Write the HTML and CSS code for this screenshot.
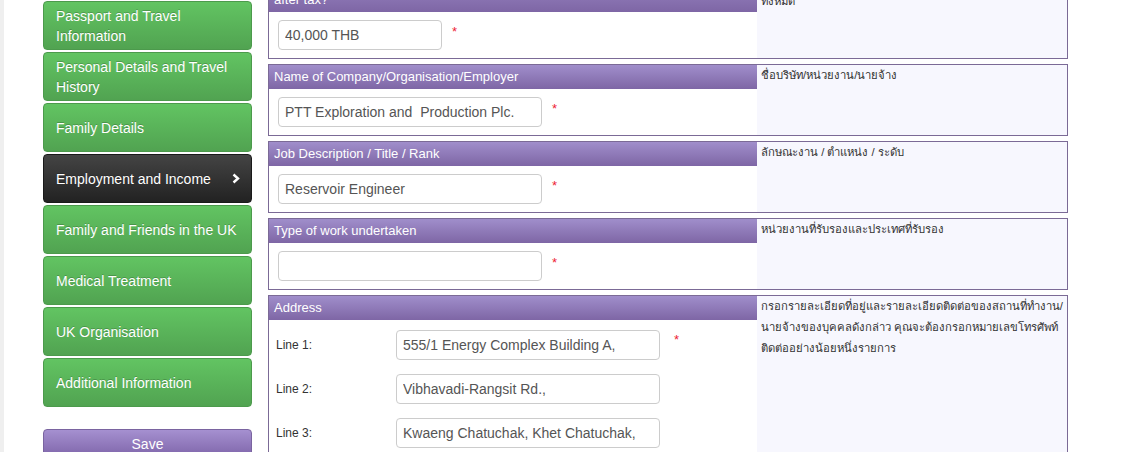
FILE: index.html
```html
<!DOCTYPE html>
<html lang="en">
<head>
    <meta charset="UTF-8">
    <title>Employment and Income</title>
    <link rel="stylesheet" href="styles.css">
</head>
<body>
    <div class="page">
        <div class="sidebar">
            <a class="nav-btn">Passport and Travel Information</a>
            <a class="nav-btn">Personal Details and Travel History</a>
            <a class="nav-btn">Family Details</a>
            <a class="nav-btn active">Employment and Income
                <svg class="chevron" width="8" height="11" viewBox="0 0 8 11"><path d="M1.5 1.5 L6 5.5 L1.5 9.5" fill="none" stroke="#fff" stroke-width="2.4"/></svg>
            </a>
            <a class="nav-btn">Family and Friends in the UK</a>
            <a class="nav-btn">Medical Treatment</a>
            <a class="nav-btn">UK Organisation</a>
            <a class="nav-btn">Additional Information</a>
            <button class="save-btn">Save</button>
        </div>

        <div class="content">
            <div class="box">
                <div class="box-main">
                    <div class="box-header">How much money do you earn each month<br>after tax?</div>
                    <div class="box-body">
                        <input type="text" class="short" value="40,000 THB"><span class="req">*</span>
                    </div>
                </div>
                <div class="box-note">รายได้ต่อเดือนหลังหักภาษี<br>ทั้งหมด</div>
            </div>

            <div class="box">
                <div class="box-main">
                    <div class="box-header">Name of Company/Organisation/Employer</div>
                    <div class="box-body">
                        <input type="text" value="PTT Exploration and  Production Plc."><span class="req">*</span>
                    </div>
                </div>
                <div class="box-note">ชื่อบริษัท/หน่วยงาน/นายจ้าง</div>
            </div>

            <div class="box">
                <div class="box-main">
                    <div class="box-header">Job Description / Title / Rank</div>
                    <div class="box-body">
                        <input type="text" value="Reservoir Engineer"><span class="req">*</span>
                    </div>
                </div>
                <div class="box-note">ลักษณะงาน / ตำแหน่ง / ระดับ</div>
            </div>

            <div class="box">
                <div class="box-main">
                    <div class="box-header">Type of work undertaken</div>
                    <div class="box-body">
                        <input type="text" value=""><span class="req">*</span>
                    </div>
                </div>
                <div class="box-note">หน่วยงานที่รับรองและประเทศที่รับรอง</div>
            </div>

            <div class="box">
                <div class="box-main">
                    <div class="box-header">Address</div>
                    <div class="address-body">
                        <div class="addr-row">
                            <label>Line 1:</label>
                            <input type="text" value="555/1 Energy Complex Building A,"><span class="req">*</span>
                        </div>
                        <div class="addr-row">
                            <label>Line 2:</label>
                            <input type="text" value="Vibhavadi-Rangsit Rd.,">
                        </div>
                        <div class="addr-row">
                            <label>Line 3:</label>
                            <input type="text" value="Kwaeng Chatuchak, Khet Chatuchak,">
                        </div>
                        <div class="addr-row">
                            <label>Line 4:</label>
                            <input type="text" value="Bangkok">
                        </div>
                    </div>
                </div>
                <div class="box-note">กรอกรายละเอียดที่อยู่และรายละเอียดติดต่อของสถานที่ทำงาน/<br>นายจ้างของบุคคลดังกล่าว คุณจะต้องกรอกหมายเลขโทรศัพท์<br>ติดต่ออย่างน้อยหนึ่งรายการ</div>
            </div>
        </div>
    </div>
</body>
</html>
```

FILE: styles.css
```css
* {
    margin: 0;
    padding: 0;
    box-sizing: border-box;
}

html, body {
    height: 100%;
    overflow: hidden;
}

body {
    background: #fff;
    font-family: "Liberation Sans", Arial, sans-serif;
    color: #333;
}

.page {
    display: flex;
    align-items: flex-start;
    border-left: 4px solid #efefef;
    min-height: 100%;
}

/* left navigation */
.sidebar {
    width: 209px;
    margin-left: 39px;
    margin-top: 1px;
    display: flex;
    flex-direction: column;
}

.nav-btn {
    position: relative;
    display: flex;
    align-items: center;
    height: 49px;
    margin-bottom: 2px;
    padding: 0 12px;
    font-size: 14px;
    line-height: 20px;
    color: #fff;
    text-shadow: 0 -1px 0 rgba(0, 0, 0, 0.2);
    background: linear-gradient(to bottom, #62c462, #51a351);
    border: 1px solid #4c9a4c;
    border-radius: 4px;
}

.nav-btn.active {
    background: linear-gradient(to bottom, #444, #222);
    border-color: #1a1a1a;
}

.chevron {
    position: absolute;
    right: 11px;
    top: 18px;
}

.save-btn {
    margin-top: 20px;
    height: 30px;
    font-family: "Liberation Sans", Arial, sans-serif;
    font-size: 14px;
    color: #fff;
    background: linear-gradient(to bottom, #a590d0, #7d63a8);
    border: 1px solid #7a64a0;
    border-radius: 4px;
    padding-bottom: 1px;
}

/* form boxes */
.content {
    width: 800px;
    margin-left: 16px;
    margin-top: -31px;
}

.box {
    display: flex;
    border: 1px solid #7b6a96;
    margin-bottom: 5px;
}

.box-main {
    width: 488px;
}

.box-header {
    background: linear-gradient(to bottom, #a08ecb, #7e66a5);
    color: #fff;
    font-size: 13px;
    line-height: 18px;
    padding: 3px 5px;
}

.box-body {
    display: flex;
    align-items: flex-start;
    padding: 8px 9px;
}

.box-note {
    flex: 1;
    background: #f7f7fe;
    font-size: 11.3px;
    line-height: 21px;
    padding: 0 4px;
    color: #333;
    white-space: nowrap;
}

input[type="text"] {
    width: 264px;
    height: 30px;
    padding: 4px 6px;
    font-family: "Liberation Sans", Arial, sans-serif;
    font-size: 14px;
    color: #555;
    border: 1px solid #ccc;
    border-radius: 4px;
    background: #fff;
}

input.short {
    width: 164px;
}

.req {
    color: #e23;
    font-size: 13px;
    margin-left: 10px;
    margin-top: 4px;
}

.address-body {
    padding: 10px 7px;
}

.addr-row {
    display: flex;
    align-items: flex-start;
    margin-bottom: 14px;
}

.addr-row label {
    width: 120px;
    font-size: 12px;
    line-height: 30px;
    color: #333;
}

.addr-row .req {
    margin-left: 14px;
    margin-top: 2px;
}
```
